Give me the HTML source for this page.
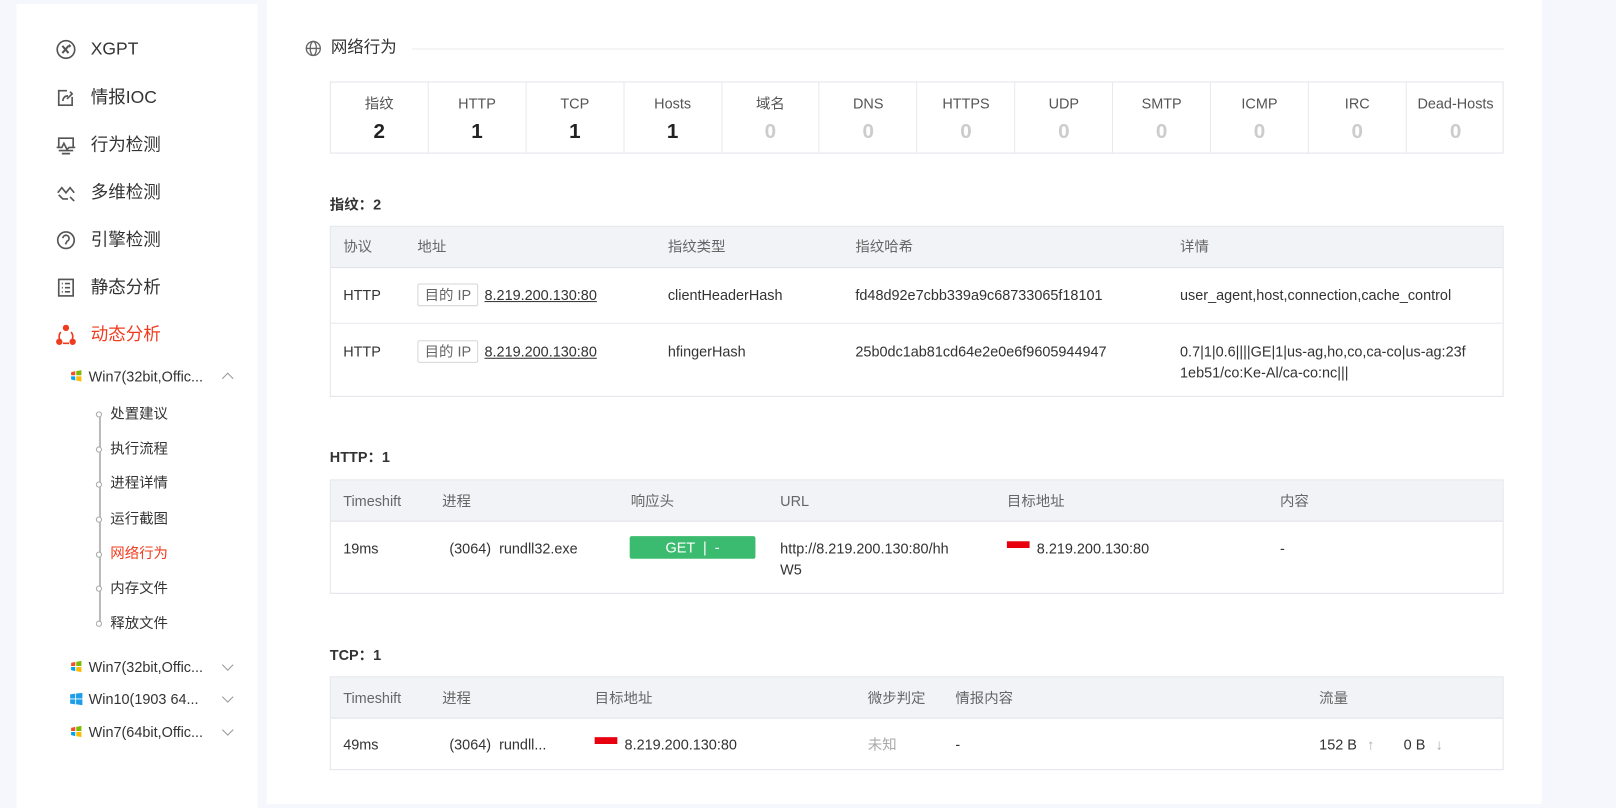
<!DOCTYPE html>
<html><head><meta charset="utf-8"><style>
*{margin:0;padding:0;box-sizing:border-box}
html,body{width:1616px;height:799px;overflow:hidden;background:#f5f7fc}
body{font-family:"Liberation Sans","Noto Sans CJK SC",sans-serif;color:#333;font-size:14px}
#w{position:absolute;left:0;top:0;width:1568px;height:775px;transform:scale(1.0306,1.031);transform-origin:0 0}
.a{position:absolute;white-space:nowrap;line-height:20px}
.side{position:absolute;left:16px;top:4px;width:234px;height:780px;background:#fff}
.main{position:absolute;left:259px;top:0;width:1237px;height:780px;background:#fff}
.mi{position:absolute;left:88px;font-size:17px;color:#333;line-height:20px}
.ic{position:absolute;left:54px;width:20px;height:20px}
.sub{position:absolute;left:86px;font-size:14px;color:#333;line-height:18px}
.tr{position:absolute;left:107px;font-size:14px;color:#333;line-height:18px}
.dot{position:absolute;left:93px;width:6px;height:6px;border:1px solid #aaa;border-radius:50%;background:#fff}
.chev{position:absolute;left:217px;width:8px;height:8px;border-left:1.3px solid #999;border-top:1.3px solid #999}
.box{position:absolute;border:1px solid #e3e5ea;background:#fff}
.hd{position:absolute;left:0;right:0;top:0;background:#f2f3f7;border-bottom:1px solid #e0e2e8}
.rl{position:absolute;left:0;right:0;height:1px;background:#e8e9ee}
.th{color:#666}
.stat{position:absolute;top:0;width:94.9px;height:68px;border-right:1px solid #e8e9ee;text-align:center}
.stat .l{margin-top:11px;font-size:14px;color:#555;line-height:18px}
.stat .n{margin-top:8px;font-size:20px;font-weight:bold;color:#222;line-height:22px}
.stat .n.z{color:#ccc}
.tag{display:inline-block;border:1px solid #d6d6d6;border-radius:2px;padding:0 6px;color:#666;line-height:20px;margin-right:6px}
.u{text-decoration:underline}
.flag{display:inline-block;width:22px;height:13px;background:linear-gradient(#e8000e 50%,#fff 50%);vertical-align:-1px;margin-right:7px;position:relative}
.win7{position:absolute;left:68px;width:12px;height:12px}
</style></head><body><div id="w">
<div class="side"></div>
<div class="main"></div>

<svg class="ic" style="top:38px" viewBox="0 0 20 20" fill="none" stroke="#555" stroke-width="1.6"><circle cx="10" cy="10" r="8.5"/><path d="M6.5 6.5l6 7M12.5 6.5l-6 7" stroke-width="2"/><path d="M13.5 5v3M12 6.5h3" stroke-width="1.2"/></svg>
<svg class="ic" style="top:85px" viewBox="0 0 20 20" fill="none" stroke="#555" stroke-width="1.6"><path d="M16 9v8H3V3h8"/><path d="M7 13c0-3 2-5 5-5M14 4l2 2-5 5"/></svg>
<svg class="ic" style="top:131px" viewBox="0 0 20 20" fill="none" stroke="#555" stroke-width="1.6"><path d="M3 12V3h14v9M1 12h5l2-4 3 6 2-2h6M3 15h14M6 18h8"/></svg>
<svg class="ic" style="top:177px" viewBox="0 0 20 20" fill="none" stroke="#555" stroke-width="1.6"><path d="M2 10l4-5 4 5 4-5 4 5M3 12l4 4h5M14 14l4 4"/></svg>
<svg class="ic" style="top:223px" viewBox="0 0 20 20" fill="none" stroke="#555" stroke-width="1.6"><circle cx="10" cy="10" r="8"/><path d="M7 8a3 3 0 1 1 4 3l-1.5 3"/></svg>
<svg class="ic" style="top:269px" viewBox="0 0 20 20" fill="none" stroke="#555" stroke-width="1.6"><rect x="3" y="2" width="14" height="16"/><path d="M6 6h1M9 6h5M6 10h1M9 10h5M6 14h1M9 14h5"/></svg>
<svg class="ic" style="top:315px" viewBox="0 0 20 20" fill="none" stroke="#f03c1e" stroke-width="1.6"><path d="M5 7a7 7 0 0 0 0 9M15 7a7 7 0 0 1 0 9M7 18h6"/><circle cx="10" cy="3" r="2.3" fill="#f03c1e"/><circle cx="3.5" cy="16.5" r="2.3" fill="#f03c1e"/><circle cx="16.5" cy="16.5" r="2.3" fill="#f03c1e"/></svg>

<div class="mi" style="top:38px">XGPT</div>
<div class="mi" style="top:85px">情报IOC</div>
<div class="mi" style="top:131px">行为检测</div>
<div class="mi" style="top:177px">多维检测</div>
<div class="mi" style="top:223px">引擎检测</div>
<div class="mi" style="top:269px">静态分析</div>
<div class="mi" style="top:315px;color:#f03c1e">动态分析</div>

<svg class="win7" style="top:359px" viewBox="0 0 12 12"><path d="M1 2l4-1v4H1z" fill="#f25022"/><path d="M6 1l5-1v5H6z" fill="#7fba00"/><path d="M1 6h4v4l-4-1z" fill="#00a4ef"/><path d="M6 6h5v5l-5-1z" fill="#ffb900"/></svg>
<div class="sub" style="top:356px">Win7(32bit,Offic...</div>
<div class="chev" style="top:363px;transform:rotate(45deg)"></div>

<div class="a" style="left:95.5px;top:403px;width:2px;height:201px;background:#bbb"></div>
<div class="dot" style="top:399px"></div><div class="tr" style="top:392px">处置建议</div>
<div class="dot" style="top:433px"></div><div class="tr" style="top:426px">执行流程</div>
<div class="dot" style="top:467px"></div><div class="tr" style="top:459px">进程详情</div>
<div class="dot" style="top:501px"></div><div class="tr" style="top:494px">运行截图</div>
<div class="dot" style="top:535px"></div><div class="tr" style="top:527px;color:#f03c1e">网络行为</div>
<div class="dot" style="top:568px"></div><div class="tr" style="top:561px">内存文件</div>
<div class="dot" style="top:602px"></div><div class="tr" style="top:595px">释放文件</div>

<svg class="win7" style="top:641px" viewBox="0 0 12 12"><path d="M1 2l4-1v4H1z" fill="#f25022"/><path d="M6 1l5-1v5H6z" fill="#7fba00"/><path d="M1 6h4v4l-4-1z" fill="#00a4ef"/><path d="M6 6h5v5l-5-1z" fill="#ffb900"/></svg>
<div class="sub" style="top:638px">Win7(32bit,Offic...</div>
<div class="chev" style="top:641px;transform:rotate(225deg)"></div>
<svg class="win7" style="top:672px" viewBox="0 0 12 12" fill="#1e9de8"><path d="M0 1.5l5-.7V5.5H0zM5.8.7L12 0v5.5H5.8zM0 6.3h5v4.9l-5-.7zM5.8 6.3H12V12l-6.2-.9z"/></svg>
<div class="sub" style="top:669px">Win10(1903 64...</div>
<div class="chev" style="top:672px;transform:rotate(225deg)"></div>
<svg class="win7" style="top:704px" viewBox="0 0 12 12"><path d="M1 2l4-1v4H1z" fill="#f25022"/><path d="M6 1l5-1v5H6z" fill="#7fba00"/><path d="M1 6h4v4l-4-1z" fill="#00a4ef"/><path d="M6 6h5v5l-5-1z" fill="#ffb900"/></svg>
<div class="sub" style="top:701px">Win7(64bit,Offic...</div>
<div class="chev" style="top:704px;transform:rotate(225deg)"></div>

<svg class="a" style="left:296px;top:39px;width:16px;height:16px" viewBox="0 0 16 16" fill="none" stroke="#666" stroke-width="1.3"><circle cx="8" cy="8" r="6.8"/><ellipse cx="8" cy="8" rx="3" ry="6.8"/><path d="M1.2 8h13.6"/></svg>
<div class="a" style="left:321px;top:37px;font-size:16px;line-height:20px;color:#333">网络行为</div>
<div class="a" style="left:400px;top:47px;width:1059px;height:1px;background:#ebebeb"></div>

<div class="box" style="left:320px;top:79px;width:1139px;height:70px">
<div class="stat" style="left:0"><div class="l">指纹</div><div class="n">2</div></div>
<div class="stat" style="left:94.9px"><div class="l">HTTP</div><div class="n">1</div></div>
<div class="stat" style="left:189.8px"><div class="l">TCP</div><div class="n">1</div></div>
<div class="stat" style="left:284.7px"><div class="l">Hosts</div><div class="n">1</div></div>
<div class="stat" style="left:379.6px"><div class="l">域名</div><div class="n z">0</div></div>
<div class="stat" style="left:474.5px"><div class="l">DNS</div><div class="n z">0</div></div>
<div class="stat" style="left:569.4px"><div class="l">HTTPS</div><div class="n z">0</div></div>
<div class="stat" style="left:664.3px"><div class="l">UDP</div><div class="n z">0</div></div>
<div class="stat" style="left:759.2px"><div class="l">SMTP</div><div class="n z">0</div></div>
<div class="stat" style="left:854.1px"><div class="l">ICMP</div><div class="n z">0</div></div>
<div class="stat" style="left:949px"><div class="l">IRC</div><div class="n z">0</div></div>
<div class="stat" style="left:1043.9px;border-right:none"><div class="l">Dead-Hosts</div><div class="n z">0</div></div>
</div>

<div class="a" style="left:320px;top:188px;font-weight:bold">指纹：2</div>
<div class="box" style="left:320px;top:219px;width:1139px;height:166px">
<div class="hd" style="height:40px"></div><div class="rl" style="top:93px"></div></div>
<div class="a th" style="left:333px;top:229px">协议</div>
<div class="a th" style="left:405px;top:229px">地址</div>
<div class="a th" style="left:648px;top:229px">指纹类型</div>
<div class="a th" style="left:830px;top:229px">指纹哈希</div>
<div class="a th" style="left:1145px;top:229px">详情</div>
<div class="a" style="left:333px;top:276px">HTTP</div>
<div class="a" style="left:405px;top:275px"><span class="tag">目的 IP</span><span class="u">8.219.200.130:80</span></div>
<div class="a" style="left:648px;top:276px">clientHeaderHash</div>
<div class="a" style="left:830px;top:276px">fd48d92e7cbb339a9c68733065f18101</div>
<div class="a" style="left:1145px;top:276px">user_agent,host,connection,cache_control</div>
<div class="a" style="left:333px;top:331px">HTTP</div>
<div class="a" style="left:405px;top:330px"><span class="tag">目的 IP</span><span class="u">8.219.200.130:80</span></div>
<div class="a" style="left:648px;top:331px">hfingerHash</div>
<div class="a" style="left:830px;top:331px">25b0dc1ab81cd64e2e0e6f9605944947</div>
<div class="a" style="left:1145px;top:331px">0.7|1|0.6||||GE|1|us-ag,ho,co,ca-co|us-ag:23f<br>1eb51/co:Ke-Al/ca-co:nc|||</div>

<div class="a" style="left:320px;top:433px;font-weight:bold">HTTP：1</div>
<div class="box" style="left:320px;top:465px;width:1139px;height:111px">
<div class="hd" style="height:40px"></div></div>
<div class="a th" style="left:333px;top:476px">Timeshift</div>
<div class="a th" style="left:429px;top:476px">进程</div>
<div class="a th" style="left:612px;top:476px">响应头</div>
<div class="a th" style="left:757px;top:476px">URL</div>
<div class="a th" style="left:977px;top:476px">目标地址</div>
<div class="a th" style="left:1242px;top:476px">内容</div>
<div class="a" style="left:333px;top:522px">19ms</div>
<div class="a" style="left:436px;top:522px">(3064)&nbsp; rundll32.exe</div>
<div class="a" style="left:611px;top:520px;width:122px;height:22px;background:#3bbb6f;border-radius:2px;color:#fff;text-align:center;line-height:22px">GET &nbsp;|&nbsp; -</div>
<div class="a" style="left:757px;top:522px">http://8.219.200.130:80/hh<br>W5</div>
<div class="a" style="left:977px;top:522px"><span class="flag"></span>8.219.200.130:80</div>
<div class="a" style="left:1242px;top:522px">-</div>

<div class="a" style="left:320px;top:625px;font-weight:bold">TCP：1</div>
<div class="box" style="left:320px;top:656px;width:1139px;height:91px">
<div class="hd" style="height:40px"></div></div>
<div class="a th" style="left:333px;top:667px">Timeshift</div>
<div class="a th" style="left:429px;top:667px">进程</div>
<div class="a th" style="left:577px;top:667px">目标地址</div>
<div class="a th" style="left:842px;top:667px">微步判定</div>
<div class="a th" style="left:927px;top:667px">情报内容</div>
<div class="a th" style="left:1280px;top:667px">流量</div>
<div class="a" style="left:333px;top:712px">49ms</div>
<div class="a" style="left:436px;top:712px">(3064)&nbsp; rundll...</div>
<div class="a" style="left:577px;top:712px"><span class="flag"></span>8.219.200.130:80</div>
<div class="a" style="left:842px;top:712px;color:#aaa">未知</div>
<div class="a" style="left:927px;top:712px">-</div>
<div class="a" style="left:1280px;top:712px">152 B <span style="color:#aaa;margin-left:6px">↑</span></div>
<div class="a" style="left:1362px;top:712px">0 B <span style="color:#aaa;margin-left:6px">↓</span></div>
</div></body></html>
